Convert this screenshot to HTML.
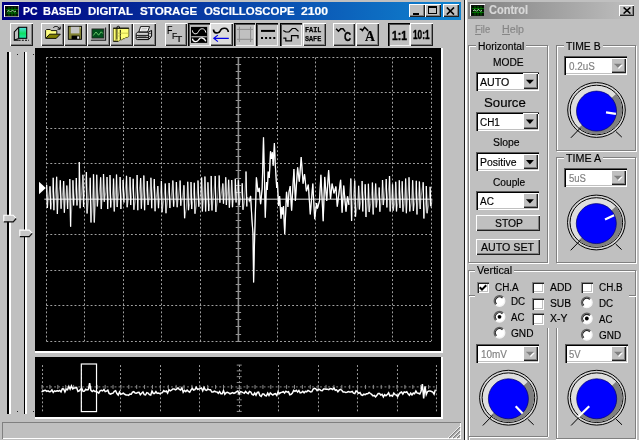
<!DOCTYPE html>
<html><head><meta charset="utf-8"><title>PC BASED DIGITAL STORAGE OSCILLOSCOPE 2100</title>
<style>
html,body{margin:0;padding:0;}
body{width:639px;height:440px;overflow:hidden;background:#c0c0c0;font-family:"Liberation Sans",sans-serif;}
#root{position:relative;width:639px;height:440px;overflow:hidden;background:#c0c0c0;}
.t{position:absolute;white-space:nowrap;-webkit-text-stroke:0.18px currentColor;}
#tx{position:absolute;left:0;top:0;width:639px;height:440px;will-change:transform;}
</style></head><body><div id="root">
<div style="position:absolute;left:2px;top:2px;width:459px;height:17.5px;background:linear-gradient(90deg,#000080 0%,#1084d0 100%);"></div>
<svg style="position:absolute;left:4px;top:5px;" width="15" height="12" viewBox="0 0 15 12"><rect x="0" y="0" width="15" height="12" fill="#c0c0c0"/><rect x="0.5" y="0.5" width="14" height="11" fill="none" stroke="#fff"/><rect x="1.5" y="1.5" width="12.5" height="9.5" fill="#001400" stroke="#101010"/><path d="M2 4.5H14M2 8H14M5 2V11M8 2V11M11 2V11" stroke="#00a800" stroke-width="0.55"/><path d="M3 6.5l2-1 1.5 1.5 2-2 2 2 1.5-1" stroke="#c0ffc0" stroke-width="0.8" fill="none"/></svg>
<div style="position:absolute;left:409px;top:3.8px;width:15.6px;height:13.6px;background:#c0c0c0;box-shadow:inset 1px 1px 0 #fff,inset -1px -1px 0 #202020,inset -2px -2px 0 #808080;"></div>
<div style="position:absolute;left:413px;top:13px;width:6px;height:2px;background:#000;"></div>
<div style="position:absolute;left:424.8px;top:3.8px;width:16px;height:13.6px;background:#c0c0c0;box-shadow:inset 1px 1px 0 #fff,inset -1px -1px 0 #202020,inset -2px -2px 0 #808080;"></div>
<div style="position:absolute;left:427.8px;top:6px;width:9px;height:8px;border:1px solid #000;border-top:2px solid #000;box-sizing:border-box;"></div>
<div style="position:absolute;left:442.8px;top:3.8px;width:16.2px;height:13.6px;background:#c0c0c0;box-shadow:inset 1px 1px 0 #fff,inset -1px -1px 0 #202020,inset -2px -2px 0 #808080;"></div>
<svg style="position:absolute;left:446.3px;top:6.5px;" width="9" height="8" viewBox="0 0 9 8"><path d="M0.8 0.5L8 7.5M8 0.5L0.8 7.5" stroke="#000" stroke-width="1.7"/></svg>
<div style="position:absolute;left:10.2px;top:23px;width:22.5px;height:22.5px;background:#c0c0c0;box-shadow:inset 1px 1px 0 #fff,inset -1px -1px 0 #202020,inset -2px -2px 0 #808080;"></div>
<div style="position:absolute;left:41px;top:23px;width:23px;height:22.5px;background:#c0c0c0;box-shadow:inset 1px 1px 0 #fff,inset -1px -1px 0 #202020,inset -2px -2px 0 #808080;"></div>
<div style="position:absolute;left:64.3px;top:23px;width:22.4px;height:22.5px;background:#c0c0c0;box-shadow:inset 1px 1px 0 #fff,inset -1px -1px 0 #202020,inset -2px -2px 0 #808080;"></div>
<div style="position:absolute;left:87px;top:23px;width:22.8px;height:22.5px;background:#c0c0c0;box-shadow:inset 1px 1px 0 #fff,inset -1px -1px 0 #202020,inset -2px -2px 0 #808080;"></div>
<div style="position:absolute;left:110px;top:23px;width:22.8px;height:22.5px;background:#c0c0c0;box-shadow:inset 1px 1px 0 #fff,inset -1px -1px 0 #202020,inset -2px -2px 0 #808080;"></div>
<div style="position:absolute;left:133.3px;top:23px;width:22.8px;height:22.5px;background:#c0c0c0;box-shadow:inset 1px 1px 0 #fff,inset -1px -1px 0 #202020,inset -2px -2px 0 #808080;"></div>
<div style="position:absolute;left:164.5px;top:23px;width:22px;height:22.5px;background:#c0c0c0;box-shadow:inset 1px 1px 0 #fff,inset -1px -1px 0 #202020,inset -2px -2px 0 #808080;"></div>
<div style="position:absolute;left:302.5px;top:23px;width:23px;height:22.5px;background:#c0c0c0;box-shadow:inset 1px 1px 0 #fff,inset -1px -1px 0 #202020,inset -2px -2px 0 #808080;"></div>
<div style="position:absolute;left:333px;top:23px;width:22.4px;height:22.5px;background:#c0c0c0;box-shadow:inset 1px 1px 0 #fff,inset -1px -1px 0 #202020,inset -2px -2px 0 #808080;"></div>
<div style="position:absolute;left:356px;top:23px;width:22.8px;height:22.5px;background:#c0c0c0;box-shadow:inset 1px 1px 0 #fff,inset -1px -1px 0 #202020,inset -2px -2px 0 #808080;"></div>
<div style="position:absolute;left:410px;top:23px;width:22.5px;height:22.5px;background:#c0c0c0;box-shadow:inset 1px 1px 0 #fff,inset -1px -1px 0 #202020,inset -2px -2px 0 #808080;"></div>
<div style="position:absolute;left:188px;top:23px;width:21.5px;height:22.5px;background:#c0c0c0;box-shadow:inset 1px 1px 0 #000,inset 2px 2px 0 #505050,inset -1px -1px 0 #f0f0f0;"></div>
<div style="position:absolute;left:233.7px;top:23px;width:21.8px;height:22.5px;background:#c0c0c0;box-shadow:inset 1px 1px 0 #000,inset 2px 2px 0 #505050,inset -1px -1px 0 #f0f0f0;"></div>
<div style="position:absolute;left:256px;top:23px;width:22px;height:22.5px;background:#c0c0c0;box-shadow:inset 1px 1px 0 #000,inset 2px 2px 0 #505050,inset -1px -1px 0 #f0f0f0;"></div>
<div style="position:absolute;left:279.5px;top:23px;width:22px;height:22.5px;background:#c0c0c0;box-shadow:inset 1px 1px 0 #000,inset 2px 2px 0 #505050,inset -1px -1px 0 #f0f0f0;"></div>
<div style="position:absolute;left:387.5px;top:23px;width:22.3px;height:22.5px;background:#c0c0c0;box-shadow:inset 1px 1px 0 #000,inset 2px 2px 0 #505050,inset -1px -1px 0 #f0f0f0;"></div>
<div style="position:absolute;left:210px;top:23px;width:22.5px;height:22.5px;background:#dcdcdc;box-shadow:inset 1px 1px 0 #fff,inset -1px -1px 0 #202020,inset -2px -2px 0 #808080;"></div>
<div style="position:absolute;left:7.4px;top:51.5px;width:1.6px;height:362.5px;background:#000;"></div>
<div style="position:absolute;left:9.0px;top:51.5px;width:1.8px;height:362.5px;background:#fff;"></div>
<div style="position:absolute;left:23.5px;top:51.5px;width:1.6px;height:362.5px;background:#000;"></div>
<div style="position:absolute;left:25.1px;top:51.5px;width:1.8px;height:362.5px;background:#fff;"></div>
<div style="position:absolute;left:35px;top:48px;width:406px;height:303px;background:#000;"></div>
<div style="position:absolute;left:441px;top:48px;width:2px;height:305.3px;background:#fff;"></div>
<div style="position:absolute;left:35px;top:351px;width:408px;height:2.3px;background:#fff;"></div>
<div style="position:absolute;left:35px;top:356.6px;width:406px;height:60.4px;background:#000;"></div>
<div style="position:absolute;left:441px;top:356.6px;width:2px;height:62.4px;background:#fff;"></div>
<div style="position:absolute;left:35px;top:417px;width:408px;height:2px;background:#fff;"></div>
<svg style="position:absolute;left:35px;top:48px;" width="406" height="303" viewBox="35 48 406 303"><path d="M46.50 57.50V341.10M84.50 57.50V341.10M123.50 57.50V341.10M161.50 57.50V341.10M200.50 57.50V341.10M277.50 57.50V341.10M315.50 57.50V341.10M354.50 57.50V341.10M392.50 57.50V341.10M431.50 57.50V341.10M46.30 57.50H431.30M46.30 92.50H431.30M46.30 128.50H431.30M46.30 163.50H431.30M46.30 234.50H431.30M46.30 270.50H431.30M46.30 305.50H431.30M46.30 341.50H431.30" stroke="#a0a0a0" stroke-width="1" stroke-dasharray="1.9 2.13" fill="none"/><path d="M238.40 57.50V341.10" stroke="#8c8c8c" stroke-width="1.6" fill="none"/><path d="M235.70 57.50H241.10M235.70 64.50H241.10M235.70 71.50H241.10M235.70 78.50H241.10M235.70 85.50H241.10M235.70 92.50H241.10M235.70 100.50H241.10M235.70 107.50H241.10M235.70 114.50H241.10M235.70 121.50H241.10M235.70 128.50H241.10M235.70 135.50H241.10M235.70 142.50H241.10M235.70 149.50H241.10M235.70 156.50H241.10M235.70 163.50H241.10M235.70 170.50H241.10M235.70 178.50H241.10M235.70 185.50H241.10M235.70 192.50H241.10M235.70 199.50H241.10M235.70 206.50H241.10M235.70 213.50H241.10M235.70 220.50H241.10M235.70 227.50H241.10M235.70 234.50H241.10M235.70 241.50H241.10M235.70 248.50H241.10M235.70 256.50H241.10M235.70 263.50H241.10M235.70 270.50H241.10M235.70 277.50H241.10M235.70 284.50H241.10M235.70 291.50H241.10M235.70 298.50H241.10M235.70 305.50H241.10M235.70 312.50H241.10M235.70 319.50H241.10M235.70 326.50H241.10M235.70 334.50H241.10M235.70 341.50H241.10" stroke="#969696" stroke-width="1" fill="none"/><path d="M44.30 199.30H431.30" stroke="#949494" stroke-width="1.5" fill="none"/><path d="M39 181.7L45.8 188L39 194.3Z" fill="#fff"/><polyline points="46.6,184.7 47.4,207.9 48.4,198.9 50.0,186.2 50.7,209.3 51.7,202.8 53.2,177.7 53.9,210.2 55.2,195.8 56.6,176.8 57.4,214.0 58.6,195.6 60.3,180.3 61.1,208.8 62.2,198.1 63.6,181.1 64.4,212.8 65.5,199.6 66.8,185.5 67.6,209.0 68.6,199.9 69.8,179.1 70.6,226.7 71.5,212.0 72.9,180.2 73.6,205.5 75.2,193.2 76.3,178.1 77.0,205.5 78.2,197.9 79.3,162.0 80.1,208.3 81.4,195.4 82.9,174.8 83.6,207.0 84.7,191.3 86.4,172.1 87.1,213.4 88.5,200.8 90.2,177.7 91.0,222.6 91.9,211.1 93.5,174.3 94.3,222.6 95.3,208.2 96.7,174.8 97.4,206.4 99.2,192.6 100.6,177.2 101.3,209.1 102.4,197.4 103.5,174.1 104.3,201.8 105.9,191.8 107.0,177.1 107.7,209.1 108.9,194.0 110.0,175.1 110.7,207.5 112.2,198.2 113.5,178.5 114.3,211.4 115.1,199.5 116.5,174.6 117.2,207.1 118.9,191.3 120.1,177.1 120.9,209.0 122.0,194.8 123.1,180.0 123.9,202.6 125.1,191.4 126.5,175.8 127.2,207.2 128.5,199.2 130.0,177.0 130.7,205.1 131.7,195.2 133.2,178.8 133.9,209.7 135.2,201.9 137.1,175.0 137.8,210.2 138.8,195.1 140.6,178.0 141.4,208.8 142.7,193.4 143.8,175.4 144.6,210.2 146.2,193.0 147.3,181.0 148.1,204.9 149.7,196.4 150.9,177.7 151.7,208.2 152.8,193.2 154.3,179.0 155.1,211.3 156.1,199.1 157.8,186.1 158.5,208.2 160.0,197.8 161.4,181.0 162.1,212.2 163.8,199.9 165.3,183.4 166.0,213.2 167.5,201.1 169.1,182.9 169.9,208.1 171.3,196.7 172.8,180.6 173.6,206.7 175.0,199.6 176.4,182.0 177.2,207.2 178.4,197.6 180.1,180.5 180.8,205.7 182.6,196.6 183.9,185.2 184.6,218.3 186.3,208.1 187.7,181.7 188.5,210.2 189.9,203.1 191.0,182.1 191.7,209.1 192.9,200.5 194.3,182.8 195.0,213.7 196.4,205.7 198.0,180.6 198.8,206.7 200.0,199.9 201.6,177.4 202.4,211.4 203.6,199.6 204.9,176.5 205.6,211.6 206.5,202.0 207.9,182.2 208.7,211.1 209.8,203.4 211.2,175.9 212.0,210.5 213.8,194.3 215.2,175.9 215.9,212.0 217.3,202.0 219.2,175.4 219.9,202.7 221.1,195.0 222.8,183.4 223.5,203.7 224.4,196.3 225.7,177.2 226.4,205.0 227.5,193.4 228.6,179.8 229.4,207.7 230.7,195.6 231.7,180.0 232.5,207.2 234.1,197.1 235.3,178.8 236.1,202.5 237.1,192.3 238.4,180.3 239.2,205.3 241.0,196.3 242.2,183.3 243.0,209.8 244.4,202.8 246.0,171.5 246.8,206.4 247.6,197.1 249.3,201.4 250.6,196.0 251.9,218.8 253.0,233.9 253.6,282.5 254.7,233.9 255.6,205.8 256.4,177.3 258.0,192.0 259.3,187.9 260.6,204.3 262.2,188.0 263.5,137.3 265.3,217.7 266.5,182.0 267.3,190.0 268.2,171.5 269.3,178.0 270.5,151.2 271.5,159.0 272.4,152.2 273.2,165.7 274.4,143.1 275.3,164.7 276.7,187.9 277.4,182.0 278.6,206.0 279.6,196.0 281.0,218.8 281.8,207.0 282.6,214.4 283.5,206.0 284.7,233.9 285.8,210.0 286.5,191.8 287.9,207.0 289.0,192.0 290.2,186.0 291.6,210.6 293.9,169.1 295.4,201.0 297.6,167.2 299.3,181.7 301.2,157.0 303.1,183.6 304.5,174.0 306.4,191.3 308.3,184.6 310.3,214.5 312.8,183.6 314.7,219.3 316.6,203.0 317.4,208.7 319.5,201.0 320.9,174.9 323.2,221.3 324.7,176.9 326.7,201.0 328.6,170.1 330.5,199.0 332.1,183.6 334.0,193.3 335.9,186.5 337.3,206.8 340.6,179.7 342.1,212.6 343.7,185.5 346.0,211.6 347.5,196.2 348.9,204.8 350.8,178.4 351.6,220.9 352.9,202.6 354.7,180.5 355.5,216.7 357.2,206.4 358.6,185.8 359.4,209.5 360.6,202.6 362.1,181.1 362.8,211.5 363.9,196.4 365.2,184.2 366.0,217.1 367.2,205.8 368.4,183.8 369.2,212.1 370.7,203.4 372.4,182.5 373.2,214.5 374.1,201.7 375.6,183.5 376.3,207.5 377.8,199.4 379.2,187.4 379.9,211.7 381.1,201.9 382.5,180.1 383.3,205.1 384.6,197.2 386.2,179.0 386.9,207.5 388.1,193.7 389.5,176.0 390.2,211.6 391.4,199.4 392.5,184.2 393.2,210.7 394.6,203.8 395.7,181.7 396.5,211.5 397.9,202.6 399.3,180.2 400.0,208.1 401.1,195.8 402.2,181.3 403.0,211.7 404.2,203.9 405.6,178.5 406.4,213.3 407.4,200.7 409.0,177.3 409.8,211.4 411.3,202.7 412.6,180.2 413.4,211.0 414.9,201.6 416.3,180.7 417.0,214.5 418.0,201.7 419.4,181.4 420.2,208.9 421.2,196.1 423.2,182.2 423.9,218.6 425.4,204.3 426.3,186.1 427.1,213.3 428.7,205.0 430.1,186.7 430.8,206.3 432.0,198.8 431.2,208.0" stroke="#fff" stroke-opacity="0.5" stroke-width="1.1" fill="none" stroke-linejoin="miter"/><path d="M46.6 184.7L47.4 207.9M50.0 186.2L50.7 209.3M53.2 177.7L53.9 210.2M56.6 176.8L57.4 214.0M60.3 180.3L61.1 208.8M63.6 181.1L64.4 212.8M66.8 185.5L67.6 209.0M69.8 179.1L70.6 226.7M72.9 180.2L73.6 205.5M76.3 178.1L77.0 205.5M79.3 162.0L80.1 208.3M82.9 174.8L83.6 207.0M86.4 172.1L87.1 213.4M90.2 177.7L91.0 222.6M93.5 174.3L94.3 222.6M96.7 174.8L97.4 206.4M100.6 177.2L101.3 209.1M103.5 174.1L104.3 201.8M107.0 177.1L107.7 209.1M110.0 175.1L110.7 207.5M113.5 178.5L114.3 211.4M116.5 174.6L117.2 207.1M120.1 177.1L120.9 209.0M123.1 180.0L123.9 202.6M126.5 175.8L127.2 207.2M130.0 177.0L130.7 205.1M133.2 178.8L133.9 209.7M137.1 175.0L137.8 210.2M140.6 178.0L141.4 208.8M143.8 175.4L144.6 210.2M147.3 181.0L148.1 204.9M150.9 177.7L151.7 208.2M154.3 179.0L155.1 211.3M157.8 186.1L158.5 208.2M161.4 181.0L162.1 212.2M165.3 183.4L166.0 213.2M169.1 182.9L169.9 208.1M172.8 180.6L173.6 206.7M176.4 182.0L177.2 207.2M180.1 180.5L180.8 205.7M183.9 185.2L184.6 218.3M187.7 181.7L188.5 210.2M191.0 182.1L191.7 209.1M194.3 182.8L195.0 213.7M198.0 180.6L198.8 206.7M201.6 177.4L202.4 211.4M204.9 176.5L205.6 211.6M207.9 182.2L208.7 211.1M211.2 175.9L212.0 210.5M215.2 175.9L215.9 212.0M219.2 175.4L219.9 202.7M222.8 183.4L223.5 203.7M225.7 177.2L226.4 205.0M228.6 179.8L229.4 207.7M231.7 180.0L232.5 207.2M235.3 178.8L236.1 202.5M238.4 180.3L239.2 205.3M242.2 183.3L243.0 209.8M246.0 171.5L246.8 206.4M350.8 178.4L351.6 220.9M354.7 180.5L355.5 216.7M358.6 185.8L359.4 209.5M362.1 181.1L362.8 211.5M365.2 184.2L366.0 217.1M368.4 183.8L369.2 212.1M372.4 182.5L373.2 214.5M375.6 183.5L376.3 207.5M379.2 187.4L379.9 211.7M382.5 180.1L383.3 205.1M386.2 179.0L386.9 207.5M389.5 176.0L390.2 211.6M392.5 184.2L393.2 210.7M395.7 181.7L396.5 211.5M399.3 180.2L400.0 208.1M402.2 181.3L403.0 211.7M405.6 178.5L406.4 213.3M409.0 177.3L409.8 211.4M412.6 180.2L413.4 211.0M416.3 180.7L417.0 214.5M419.4 181.4L420.2 208.9M423.2 182.2L423.9 218.6M426.3 186.1L427.1 213.3M430.1 186.7L430.8 206.3" stroke="#fff" stroke-width="1.25" fill="none"/><polyline points="249.3,201.4 250.6,196.0 251.9,218.8 253.0,233.9 253.6,282.5 254.7,233.9 255.6,205.8 256.4,177.3 258.0,192.0 259.3,187.9 260.6,204.3 262.2,188.0 263.5,137.3 265.3,217.7 266.5,182.0 267.3,190.0 268.2,171.5 269.3,178.0 270.5,151.2 271.5,159.0 272.4,152.2 273.2,165.7 274.4,143.1 275.3,164.7 276.7,187.9 277.4,182.0 278.6,206.0 279.6,196.0 281.0,218.8 281.8,207.0 282.6,214.4 283.5,206.0 284.7,233.9 285.8,210.0 286.5,191.8 287.9,207.0 289.0,192.0 290.2,186.0 291.6,210.6 293.9,169.1 295.4,201.0 297.6,167.2 299.3,181.7 301.2,157.0 303.1,183.6 304.5,174.0 306.4,191.3 308.3,184.6 310.3,214.5 312.8,183.6 314.7,219.3 316.6,203.0 317.4,208.7 319.5,201.0 320.9,174.9 323.2,221.3 324.7,176.9 326.7,201.0 328.6,170.1 330.5,199.0 332.1,183.6 334.0,193.3 335.9,186.5 337.3,206.8 340.6,179.7 342.1,212.6 343.7,185.5 346.0,211.6 347.5,196.2 348.9,204.8" stroke="#fff" stroke-width="1.2" fill="none" stroke-linejoin="miter"/></svg>
<svg style="position:absolute;left:35px;top:356.6px;" width="406" height="60.4" viewBox="35 356.6 406 60.4"><path d="M42.50 364.70V411.00M81.50 364.70V411.00M120.50 364.70V411.00M160.50 364.70V411.00M199.50 364.70V411.00M239.50 364.70V411.00M278.50 364.70V411.00M318.50 364.70V411.00M357.50 364.70V411.00M397.50 364.70V411.00M436.50 364.70V411.00" stroke="#a0a0a0" stroke-width="1" stroke-dasharray="1.9 2.13" fill="none"/><path d="M42.00 386.50H436.50" stroke="#888" stroke-width="1" stroke-dasharray="1.9 2.13" fill="none"/><path d="M236.75 364.70H241.75M236.75 370.49H241.75M236.75 376.28H241.75M236.75 382.06H241.75M236.75 387.85H241.75M236.75 393.64H241.75M236.75 399.43H241.75M236.75 405.21H241.75M236.75 411.00H241.75M42.00 384.50V388.50M49.89 384.50V388.50M57.78 384.50V388.50M65.67 384.50V388.50M73.56 384.50V388.50M81.45 384.50V388.50M89.34 384.50V388.50M97.23 384.50V388.50M105.12 384.50V388.50M113.01 384.50V388.50M120.90 384.50V388.50M128.79 384.50V388.50M136.68 384.50V388.50M144.57 384.50V388.50M152.46 384.50V388.50M160.35 384.50V388.50M168.24 384.50V388.50M176.13 384.50V388.50M184.02 384.50V388.50M191.91 384.50V388.50M199.80 384.50V388.50M207.69 384.50V388.50M215.58 384.50V388.50M223.47 384.50V388.50M231.36 384.50V388.50M239.25 384.50V388.50M247.14 384.50V388.50M255.03 384.50V388.50M262.92 384.50V388.50M270.81 384.50V388.50M278.70 384.50V388.50M286.59 384.50V388.50M294.48 384.50V388.50M302.37 384.50V388.50M310.26 384.50V388.50M318.15 384.50V388.50M326.04 384.50V388.50M333.93 384.50V388.50M341.82 384.50V388.50M349.71 384.50V388.50M357.60 384.50V388.50M365.49 384.50V388.50M373.38 384.50V388.50M381.27 384.50V388.50M389.16 384.50V388.50M397.05 384.50V388.50M404.94 384.50V388.50M412.83 384.50V388.50M420.72 384.50V388.50M428.61 384.50V388.50M436.50 384.50V388.50" stroke="#909090" stroke-width="1" fill="none"/><polyline points="41.5,391.3 42.8,390.8 44.1,390.1 45.4,389.8 46.7,391.0 48.0,390.4 49.3,391.3 50.6,391.1 51.9,389.5 53.2,392.1 54.5,390.5 55.8,391.0 57.1,390.3 58.4,390.8 59.7,390.0 61.0,391.5 62.3,388.4 63.6,388.6 64.9,391.5 66.2,388.7 67.5,389.4 68.8,386.0 70.1,388.8 71.4,385.5 72.7,388.4 74.0,387.6 75.3,387.5 76.6,387.0 77.9,391.0 79.2,390.4 80.5,389.0 81.8,388.0 83.1,391.1 84.4,390.8 85.7,388.9 87.0,389.5 88.3,389.2 89.6,382.8 90.9,389.9 92.2,391.1 93.5,390.1 94.8,391.0 96.1,390.8 97.4,391.8 98.7,392.8 100.0,390.4 101.3,390.0 102.6,390.5 103.9,389.1 105.2,391.1 106.5,390.7 107.8,389.8 109.1,393.0 110.4,393.8 111.7,393.1 113.0,392.7 114.3,391.0 115.6,390.3 116.9,393.1 118.2,394.6 119.5,391.6 120.8,393.9 122.1,393.4 123.4,392.8 124.7,393.9 126.0,394.5 127.3,394.5 128.6,395.0 129.9,393.7 131.2,393.9 132.5,391.8 133.8,391.2 135.1,392.6 136.4,392.8 137.7,392.2 139.0,392.0 140.3,394.3 141.6,392.8 142.9,391.6 144.2,394.3 145.5,394.6 146.8,392.2 148.1,392.7 149.4,394.3 150.7,394.7 152.0,390.7 153.3,393.0 154.6,393.0 155.9,391.1 157.2,393.0 158.5,392.7 159.8,393.2 161.1,392.6 162.4,392.3 163.7,390.3 165.0,391.3 166.3,390.6 167.6,392.7 168.9,389.4 170.2,390.5 171.5,389.8 172.8,388.5 174.1,388.5 175.4,389.4 176.7,388.7 178.0,387.4 179.3,389.1 180.6,389.6 181.9,387.4 183.2,391.8 184.5,389.9 185.8,391.2 187.1,389.7 188.4,391.0 189.7,391.8 191.0,389.5 192.3,388.1 193.6,389.7 194.9,389.3 196.2,386.9 197.5,389.0 198.8,388.6 200.1,388.2 201.4,387.6 202.7,390.5 204.0,387.0 205.3,389.5 206.6,390.0 207.9,388.5 209.2,389.4 210.5,389.3 211.8,391.6 213.1,391.5 214.4,390.8 215.7,391.4 217.0,391.6 218.3,392.9 219.6,391.1 220.9,393.3 222.2,393.3 223.5,390.2 224.8,393.8 226.1,392.3 227.4,391.9 228.7,392.5 230.0,393.4 231.3,392.8 232.6,392.2 233.9,393.0 235.2,392.4 236.5,391.2 237.8,390.6 239.1,393.4 240.4,391.2 241.7,391.5 243.0,392.2 244.3,392.8 245.6,391.1 246.9,392.4 248.2,393.2 249.5,391.0 250.8,391.6 252.1,394.0 253.4,394.6 254.7,392.6 256.0,394.8 257.3,392.1 258.6,391.8 259.9,395.2 261.2,396.1 262.5,393.6 263.8,393.6 265.1,395.1 266.4,395.4 267.7,392.7 269.0,395.0 270.3,392.5 271.6,393.7 272.9,394.7 274.2,393.6 275.5,393.3 276.8,395.1 278.1,391.3 279.4,393.2 280.7,392.2 282.0,391.8 283.3,391.3 284.6,392.7 285.9,390.8 287.2,391.7 288.5,391.2 289.8,394.4 291.1,393.9 292.4,392.6 293.7,390.0 295.0,390.9 296.3,390.0 297.6,391.7 298.9,390.1 300.2,392.5 301.5,392.2 302.8,390.9 304.1,392.4 305.4,391.0 306.7,391.4 308.0,390.0 309.3,390.8 310.6,391.6 311.9,391.2 313.2,388.6 314.5,387.9 315.8,388.5 317.1,390.2 318.4,388.8 319.7,389.0 321.0,390.2 322.3,390.4 323.6,388.6 324.9,388.5 326.2,388.8 327.5,388.8 328.8,389.2 330.1,388.2 331.4,388.4 332.7,389.1 334.0,387.6 335.3,389.9 336.6,389.4 337.9,391.3 339.2,389.8 340.5,389.0 341.8,389.8 343.1,391.6 344.4,391.5 345.7,392.0 347.0,391.8 348.3,391.2 349.6,391.6 350.9,391.5 352.2,391.0 353.5,392.7 354.8,393.2 356.1,390.5 357.4,391.4 358.7,392.9 360.0,392.2 361.3,394.4 362.6,395.0 363.9,393.8 365.2,394.2 366.5,393.4 367.8,393.3 369.1,392.1 370.4,393.1 371.7,394.0 373.0,395.5 374.3,395.0 375.6,396.5 376.9,394.9 378.2,393.1 379.5,393.2 380.8,394.7 382.1,393.9 383.4,396.5 384.7,394.2 386.0,395.4 387.3,394.2 388.6,392.4 389.9,395.5 391.2,394.9 392.5,395.8 393.8,392.7 395.1,394.2 396.4,394.6 397.7,396.2 399.0,393.8 400.3,392.3 401.6,391.6 402.9,393.7 404.2,391.5 405.5,392.1 406.8,391.4 408.1,393.5 409.4,394.8 410.7,392.7 412.0,394.5 413.3,392.6 414.6,393.4 415.9,390.6 417.2,392.7 418.5,392.9 419.8,393.6 421.1,390.8 422.4,383.7 423.7,398.0 425.0,386.0 426.3,394.2 427.6,391.1 428.9,390.7 430.2,390.7 431.5,391.1 432.8,391.7 434.1,393.7 435.4,389.2" stroke="#fff" stroke-width="1.5" fill="none"/><rect x="81.3" y="363.6" width="15.2" height="47.6" fill="none" stroke="#fff" stroke-width="1.2"/></svg>
<div style="position:absolute;left:2px;top:421.8px;width:458.5px;height:17.4px;box-shadow:inset 1px 1px 0 #808080,inset -1px -1px 0 #fff;"></div>
<div style="position:absolute;left:461.2px;top:0px;width:2.3px;height:440px;background:#c0c0c0;"></div>
<div style="position:absolute;left:463.6px;top:0px;width:1.4px;height:440px;background:#181818;"></div>
<div style="position:absolute;left:465px;top:0px;width:2.3px;height:440px;background:#fff;"></div>
<div style="position:absolute;left:468px;top:2.4px;width:169px;height:16.4px;background:linear-gradient(90deg,#808080 0%,#c0c0c0 100%);"></div>
<svg style="position:absolute;left:470.3px;top:3.6px;" width="15" height="12.5" viewBox="0 0 15 12.5"><rect x="0" y="0" width="15" height="12.5" fill="#d0d0d0"/><rect x="0.5" y="0.5" width="14" height="11.5" fill="none" stroke="#fff"/><rect x="1.5" y="1.5" width="12.5" height="10" fill="#001400" stroke="#101010"/><path d="M2 4.5H14M2 8.5H14M5 2V11.5M8 2V11.5M11 2V11.5" stroke="#00a800" stroke-width="0.55"/><path d="M3 6.8l2-1 1.5 1.5 2-2 2 2 1.5-1" stroke="#d0ffd0" stroke-width="0.8" fill="none"/></svg>
<div style="position:absolute;left:619px;top:4.5px;width:15px;height:11.5px;background:#c0c0c0;box-shadow:inset 1px 1px 0 #fff,inset -1px -1px 0 #202020,inset -2px -2px 0 #808080;"></div>
<svg style="position:absolute;left:622.5px;top:6.5px;" width="8" height="7" viewBox="0 0 8 7"><path d="M0.6 0.4L7.4 6.6M7.4 0.4L0.6 6.6" stroke="#000" stroke-width="1.5"/></svg>
<div style="position:absolute;left:468px;top:45px;width:80px;height:218px;box-sizing:border-box;border:1px solid #808080;box-shadow:1px 1px 0 #fff,inset 1px 1px 0 #fff;"></div>
<div style="position:absolute;left:475.6px;top:44px;width:50.4px;height:3px;background:#c0c0c0;"></div>
<div style="position:absolute;left:556px;top:45px;width:80px;height:106px;box-sizing:border-box;border:1px solid #808080;box-shadow:1px 1px 0 #fff,inset 1px 1px 0 #fff;"></div>
<div style="position:absolute;left:564.1px;top:44px;width:38.6px;height:3px;background:#c0c0c0;"></div>
<div style="position:absolute;left:556px;top:157px;width:80px;height:106px;box-sizing:border-box;border:1px solid #808080;box-shadow:1px 1px 0 #fff,inset 1px 1px 0 #fff;"></div>
<div style="position:absolute;left:564.1px;top:156px;width:39.2px;height:3px;background:#c0c0c0;"></div>
<div style="position:absolute;left:468px;top:270px;width:168px;height:175px;box-sizing:border-box;border:1px solid #808080;box-shadow:1px 1px 0 #fff,inset 1px 1px 0 #fff;"></div>
<div style="position:absolute;left:475.1px;top:269px;width:39.3px;height:3px;background:#c0c0c0;"></div>
<div style="position:absolute;left:474.6px;top:33.8px;width:6px;height:1px;background:#868686;"></div>
<div style="position:absolute;left:502.1px;top:33.8px;width:7.5px;height:1px;background:#868686;"></div>
<div style="position:absolute;left:476.4px;top:71.5px;width:63px;height:19.3px;background:#fff;box-shadow:inset 1px 1px 0 #585858,inset 2px 2px 0 #000,inset -1px -1px 0 #fff,inset -2px -2px 0 #c0c0c0;"></div>
<div style="position:absolute;left:522.5999999999999px;top:73.3px;width:15.2px;height:15.9px;background:#c0c0c0;box-shadow:inset 1px 1px 0 #fff,inset -1px -1px 0 #202020,inset -2px -2px 0 #808080;"></div>
<svg style="position:absolute;left:0px;top:0px;pointer-events:none;" width="639" height="440" viewBox="0 0 639 440"><path d="M525.90 79.65H533.90L529.90 83.95Z" fill="#000"/></svg>
<div style="position:absolute;left:476.4px;top:111.5px;width:63px;height:19.2px;background:#fff;box-shadow:inset 1px 1px 0 #585858,inset 2px 2px 0 #000,inset -1px -1px 0 #fff,inset -2px -2px 0 #c0c0c0;"></div>
<div style="position:absolute;left:522.5999999999999px;top:113.3px;width:15.2px;height:15.799999999999999px;background:#c0c0c0;box-shadow:inset 1px 1px 0 #fff,inset -1px -1px 0 #202020,inset -2px -2px 0 #808080;"></div>
<svg style="position:absolute;left:0px;top:0px;pointer-events:none;" width="639" height="440" viewBox="0 0 639 440"><path d="M525.90 119.60H533.90L529.90 123.90Z" fill="#000"/></svg>
<div style="position:absolute;left:476.4px;top:152.2px;width:63px;height:18.8px;background:#fff;box-shadow:inset 1px 1px 0 #585858,inset 2px 2px 0 #000,inset -1px -1px 0 #fff,inset -2px -2px 0 #c0c0c0;"></div>
<div style="position:absolute;left:522.5999999999999px;top:154.0px;width:15.2px;height:15.4px;background:#c0c0c0;box-shadow:inset 1px 1px 0 #fff,inset -1px -1px 0 #202020,inset -2px -2px 0 #808080;"></div>
<svg style="position:absolute;left:0px;top:0px;pointer-events:none;" width="639" height="440" viewBox="0 0 639 440"><path d="M525.90 160.10H533.90L529.90 164.40Z" fill="#000"/></svg>
<div style="position:absolute;left:476.4px;top:191.3px;width:63px;height:18.8px;background:#fff;box-shadow:inset 1px 1px 0 #585858,inset 2px 2px 0 #000,inset -1px -1px 0 #fff,inset -2px -2px 0 #c0c0c0;"></div>
<div style="position:absolute;left:522.5999999999999px;top:193.10000000000002px;width:15.2px;height:15.4px;background:#c0c0c0;box-shadow:inset 1px 1px 0 #fff,inset -1px -1px 0 #202020,inset -2px -2px 0 #808080;"></div>
<svg style="position:absolute;left:0px;top:0px;pointer-events:none;" width="639" height="440" viewBox="0 0 639 440"><path d="M525.90 199.20H533.90L529.90 203.50Z" fill="#000"/></svg>
<div style="position:absolute;left:564.4px;top:55.7px;width:63px;height:19px;background:#fff;box-shadow:inset 1px 1px 0 #585858,inset 2px 2px 0 #000,inset -1px -1px 0 #fff,inset -2px -2px 0 #c0c0c0;"></div>
<div style="position:absolute;left:610.5999999999999px;top:57.5px;width:15.2px;height:15.6px;background:#c0c0c0;box-shadow:inset 1px 1px 0 #fff,inset -1px -1px 0 #202020,inset -2px -2px 0 #808080;"></div>
<svg style="position:absolute;left:0px;top:0px;pointer-events:none;" width="639" height="440" viewBox="0 0 639 440"><path d="M614.90 64.70H622.90L618.90 69.00Z" fill="#fff"/><path d="M613.90 63.70H621.90L617.90 68.00Z" fill="#808080"/></svg>
<div style="position:absolute;left:564.3px;top:167.7px;width:63px;height:19.2px;background:#fff;box-shadow:inset 1px 1px 0 #585858,inset 2px 2px 0 #000,inset -1px -1px 0 #fff,inset -2px -2px 0 #c0c0c0;"></div>
<div style="position:absolute;left:610.4999999999999px;top:169.5px;width:15.2px;height:15.799999999999999px;background:#c0c0c0;box-shadow:inset 1px 1px 0 #fff,inset -1px -1px 0 #202020,inset -2px -2px 0 #808080;"></div>
<svg style="position:absolute;left:0px;top:0px;pointer-events:none;" width="639" height="440" viewBox="0 0 639 440"><path d="M614.80 176.80H622.80L618.80 181.10Z" fill="#fff"/><path d="M613.80 175.80H621.80L617.80 180.10Z" fill="#808080"/></svg>
<div style="position:absolute;left:476.4px;top:343.7px;width:63px;height:19.2px;background:#fff;box-shadow:inset 1px 1px 0 #585858,inset 2px 2px 0 #000,inset -1px -1px 0 #fff,inset -2px -2px 0 #c0c0c0;"></div>
<div style="position:absolute;left:522.5999999999999px;top:345.5px;width:15.2px;height:15.799999999999999px;background:#c0c0c0;box-shadow:inset 1px 1px 0 #fff,inset -1px -1px 0 #202020,inset -2px -2px 0 #808080;"></div>
<svg style="position:absolute;left:0px;top:0px;pointer-events:none;" width="639" height="440" viewBox="0 0 639 440"><path d="M526.90 352.80H534.90L530.90 357.10Z" fill="#fff"/><path d="M525.90 351.80H533.90L529.90 356.10Z" fill="#808080"/></svg>
<div style="position:absolute;left:564.5px;top:343.7px;width:63px;height:19.2px;background:#fff;box-shadow:inset 1px 1px 0 #585858,inset 2px 2px 0 #000,inset -1px -1px 0 #fff,inset -2px -2px 0 #c0c0c0;"></div>
<div style="position:absolute;left:610.6999999999999px;top:345.5px;width:15.2px;height:15.799999999999999px;background:#c0c0c0;box-shadow:inset 1px 1px 0 #fff,inset -1px -1px 0 #202020,inset -2px -2px 0 #808080;"></div>
<svg style="position:absolute;left:0px;top:0px;pointer-events:none;" width="639" height="440" viewBox="0 0 639 440"><path d="M615.00 352.80H623.00L619.00 357.10Z" fill="#fff"/><path d="M614.00 351.80H622.00L618.00 356.10Z" fill="#808080"/></svg>
<div style="position:absolute;left:476.2px;top:214.6px;width:63.8px;height:16.8px;background:#c0c0c0;box-shadow:inset 1px 1px 0 #fff,inset -1px -1px 0 #202020,inset -2px -2px 0 #808080;"></div>
<div style="position:absolute;left:476.2px;top:239px;width:63.8px;height:16.4px;background:#c0c0c0;box-shadow:inset 1px 1px 0 #fff,inset -1px -1px 0 #202020,inset -2px -2px 0 #808080;"></div>
<div style="position:absolute;left:476.7px;top:281.6px;width:12px;height:11.6px;background:#fff;box-shadow:inset 1px 1px 0 #808080,inset 2px 2px 0 #202020,inset -1px -1px 0 #fff,inset -2px -2px 0 #c0c0c0;"></div>
<svg style="position:absolute;left:476.7px;top:281.6px;" width="12" height="12" viewBox="0 0 12 12"><path d="M2.8 5.2L5 7.6L9.2 3.2" stroke="#000" stroke-width="2" fill="none"/></svg>
<div style="position:absolute;left:532.4px;top:281.6px;width:12px;height:11.6px;background:#fff;box-shadow:inset 1px 1px 0 #808080,inset 2px 2px 0 #202020,inset -1px -1px 0 #fff,inset -2px -2px 0 #c0c0c0;"></div>
<div style="position:absolute;left:532.4px;top:298px;width:12px;height:11.6px;background:#fff;box-shadow:inset 1px 1px 0 #808080,inset 2px 2px 0 #202020,inset -1px -1px 0 #fff,inset -2px -2px 0 #c0c0c0;"></div>
<div style="position:absolute;left:532.4px;top:313.4px;width:12px;height:11.6px;background:#fff;box-shadow:inset 1px 1px 0 #808080,inset 2px 2px 0 #202020,inset -1px -1px 0 #fff,inset -2px -2px 0 #c0c0c0;"></div>
<div style="position:absolute;left:580.9px;top:281.6px;width:12px;height:11.6px;background:#fff;box-shadow:inset 1px 1px 0 #808080,inset 2px 2px 0 #202020,inset -1px -1px 0 #fff,inset -2px -2px 0 #c0c0c0;"></div>
<svg style="position:absolute;left:0px;top:0px;pointer-events:none;" width="639" height="440" viewBox="0 0 639 440"><circle cx="499.5" cy="301" r="5.3" fill="#fff"/><path d="M495.75 304.75A5.3 5.3 0 0 1 503.25 297.25" stroke="#606060" stroke-width="1.3" fill="none"/><path d="M496.60 303.90A4.1 4.1 0 0 1 502.40 298.10" stroke="#202020" stroke-width="1.1" fill="none"/><path d="M495.75 304.75A5.3 5.3 0 0 0 503.25 297.25" stroke="#f4f4f4" stroke-width="1.3" fill="none"/></svg>
<svg style="position:absolute;left:0px;top:0px;pointer-events:none;" width="639" height="440" viewBox="0 0 639 440"><circle cx="499.5" cy="316.8" r="5.3" fill="#fff"/><path d="M495.75 320.55A5.3 5.3 0 0 1 503.25 313.05" stroke="#606060" stroke-width="1.3" fill="none"/><path d="M496.60 319.70A4.1 4.1 0 0 1 502.40 313.90" stroke="#202020" stroke-width="1.1" fill="none"/><path d="M495.75 320.55A5.3 5.3 0 0 0 503.25 313.05" stroke="#f4f4f4" stroke-width="1.3" fill="none"/><circle cx="499.5" cy="316.8" r="1.9" fill="#000"/></svg>
<svg style="position:absolute;left:0px;top:0px;pointer-events:none;" width="639" height="440" viewBox="0 0 639 440"><circle cx="499.5" cy="332.7" r="5.3" fill="#fff"/><path d="M495.75 336.45A5.3 5.3 0 0 1 503.25 328.95" stroke="#606060" stroke-width="1.3" fill="none"/><path d="M496.60 335.60A4.1 4.1 0 0 1 502.40 329.80" stroke="#202020" stroke-width="1.1" fill="none"/><path d="M495.75 336.45A5.3 5.3 0 0 0 503.25 328.95" stroke="#f4f4f4" stroke-width="1.3" fill="none"/></svg>
<svg style="position:absolute;left:0px;top:0px;pointer-events:none;" width="639" height="440" viewBox="0 0 639 440"><circle cx="586.8" cy="302.4" r="5.3" fill="#fff"/><path d="M583.05 306.15A5.3 5.3 0 0 1 590.55 298.65" stroke="#606060" stroke-width="1.3" fill="none"/><path d="M583.90 305.30A4.1 4.1 0 0 1 589.70 299.50" stroke="#202020" stroke-width="1.1" fill="none"/><path d="M583.05 306.15A5.3 5.3 0 0 0 590.55 298.65" stroke="#f4f4f4" stroke-width="1.3" fill="none"/></svg>
<svg style="position:absolute;left:0px;top:0px;pointer-events:none;" width="639" height="440" viewBox="0 0 639 440"><circle cx="586.8" cy="318.5" r="5.3" fill="#fff"/><path d="M583.05 322.25A5.3 5.3 0 0 1 590.55 314.75" stroke="#606060" stroke-width="1.3" fill="none"/><path d="M583.90 321.40A4.1 4.1 0 0 1 589.70 315.60" stroke="#202020" stroke-width="1.1" fill="none"/><path d="M583.05 322.25A5.3 5.3 0 0 0 590.55 314.75" stroke="#f4f4f4" stroke-width="1.3" fill="none"/><circle cx="586.8" cy="318.5" r="1.9" fill="#000"/></svg>
<svg style="position:absolute;left:0px;top:0px;pointer-events:none;" width="639" height="440" viewBox="0 0 639 440"><circle cx="586.8" cy="334.7" r="5.3" fill="#fff"/><path d="M583.05 338.45A5.3 5.3 0 0 1 590.55 330.95" stroke="#606060" stroke-width="1.3" fill="none"/><path d="M583.90 337.60A4.1 4.1 0 0 1 589.70 331.80" stroke="#202020" stroke-width="1.1" fill="none"/><path d="M583.05 338.45A5.3 5.3 0 0 0 590.55 330.95" stroke="#f4f4f4" stroke-width="1.3" fill="none"/></svg>
<div style="position:absolute;left:547.3px;top:327.7px;width:1px;height:109.30000000000001px;background:#808080;"></div>
<div style="position:absolute;left:548.3px;top:327.7px;width:1px;height:109.30000000000001px;background:#fff;"></div>
<div style="position:absolute;left:556.1px;top:327.7px;width:1px;height:110.30000000000001px;background:#808080;"></div>
<div style="position:absolute;left:557.1px;top:327.7px;width:1px;height:110.30000000000001px;background:#fff;"></div>
<div style="position:absolute;left:469px;top:294.5px;width:6.300000000000011px;height:1px;background:#808080;"></div>
<div style="position:absolute;left:469px;top:295.5px;width:6.300000000000011px;height:1px;background:#fff;"></div>
<div style="position:absolute;left:628.6px;top:295.2px;width:7.699999999999932px;height:1px;background:#808080;"></div>
<div style="position:absolute;left:628.6px;top:296.2px;width:7.699999999999932px;height:1px;background:#fff;"></div>
<div style="position:absolute;left:469px;top:436px;width:79.29999999999995px;height:1px;background:#808080;"></div>
<div style="position:absolute;left:469px;top:437px;width:79.29999999999995px;height:1px;background:#fff;"></div>
<div style="position:absolute;left:556.1px;top:437.5px;width:79.89999999999998px;height:1px;background:#808080;"></div>
<div style="position:absolute;left:556.1px;top:438.5px;width:79.89999999999998px;height:1px;background:#fff;"></div>
<svg style="position:absolute;left:0px;top:0px;pointer-events:none;" width="639" height="440" viewBox="0 0 639 440"><ellipse cx="596.5" cy="110" rx="28.8" ry="27.4" fill="#d4d4d4" stroke="#000" stroke-width="1"/><ellipse cx="596.5" cy="110" rx="26.3" ry="24.8" fill="#dedede" stroke="#000" stroke-width="1"/><path d="M615.97 94.06A25.8 24.3 0 0 1 578.90 127.77Z" fill="#808080"/><circle cx="596.5" cy="111.1" r="20" fill="#0000ff" stroke="#000070" stroke-width="0.7"/><path d="M570.90 137.80L580.50 127.90M621.80 137.10L615.90 131.50" stroke="#000" stroke-width="1"/><path d="M606.01 112.44L615.91 113.83" stroke="#fff" stroke-width="2.2"/></svg>
<svg style="position:absolute;left:0px;top:0px;pointer-events:none;" width="639" height="440" viewBox="0 0 639 440"><ellipse cx="596.3" cy="222.5" rx="28.8" ry="27.4" fill="#d4d4d4" stroke="#000" stroke-width="1"/><ellipse cx="596.3" cy="222.5" rx="26.3" ry="24.8" fill="#dedede" stroke="#000" stroke-width="1"/><path d="M615.77 206.56A25.8 24.3 0 0 1 578.70 240.27Z" fill="#808080"/><circle cx="596.3" cy="223.6" r="20" fill="#0000ff" stroke="#000070" stroke-width="0.7"/><path d="M570.70 250.30L580.30 240.40M621.60 249.60L615.70 244.00" stroke="#000" stroke-width="1"/><path d="M605.00 219.54L614.06 215.32" stroke="#fff" stroke-width="2.2"/></svg>
<svg style="position:absolute;left:0px;top:0px;pointer-events:none;" width="639" height="440" viewBox="0 0 639 440"><ellipse cx="508.4" cy="397.7" rx="28.8" ry="27.4" fill="#d4d4d4" stroke="#000" stroke-width="1"/><ellipse cx="508.4" cy="397.7" rx="26.3" ry="24.8" fill="#dedede" stroke="#000" stroke-width="1"/><path d="M527.87 381.76A25.8 24.3 0 0 1 490.80 415.47Z" fill="#808080"/><circle cx="508.4" cy="398.8" r="20" fill="#0000ff" stroke="#000070" stroke-width="0.7"/><path d="M482.80 425.50L492.40 415.60M533.70 424.80L527.80 419.20" stroke="#000" stroke-width="1"/><path d="M515.69 406.35L522.64 413.55" stroke="#fff" stroke-width="2.2"/></svg>
<svg style="position:absolute;left:0px;top:0px;pointer-events:none;" width="639" height="440" viewBox="0 0 639 440"><ellipse cx="596.7" cy="397.7" rx="28.8" ry="27.4" fill="#d4d4d4" stroke="#000" stroke-width="1"/><ellipse cx="596.7" cy="397.7" rx="26.3" ry="24.8" fill="#dedede" stroke="#000" stroke-width="1"/><path d="M616.17 381.76A25.8 24.3 0 0 1 579.10 415.47Z" fill="#808080"/><circle cx="596.7" cy="398.8" r="20" fill="#0000ff" stroke="#000070" stroke-width="0.7"/><path d="M571.10 425.50L580.70 415.60M622.00 424.80L616.10 419.20" stroke="#000" stroke-width="1"/><path d="M589.22 406.17L578.19 417.06" stroke="#fff" stroke-width="2.2"/></svg>
<svg style="position:absolute;left:0px;top:0px;pointer-events:none;" width="639" height="60" viewBox="0 0 639 60"><defs><linearGradient id="gd" x1="0" y1="0" x2="0" y2="1"><stop offset="0" stop-color="#58e0e8"/><stop offset="0.55" stop-color="#10e060"/><stop offset="1" stop-color="#20e8b0"/></linearGradient></defs><path d="M18.6 27.4L14.3 31.9V40.1H18.6" fill="none" stroke="#000" stroke-width="1.1"/><path d="M14.3 40.1L18.6 38.4" stroke="#000" stroke-width="0.9"/><rect x="18.7" y="27.3" width="8" height="11" fill="url(#gd)" stroke="#000" stroke-width="1.1"/><path d="M18.6 40.2H29" stroke="#000" stroke-width="1.1" stroke-dasharray="2 1.2"/><path d="M45.6 38.2V30.4L46.6 29.5H50.2L51.2 30.6H56.8V34" fill="#ffff80" stroke="#000" stroke-width="0.9"/><path d="M45.8 38.4L49.6 34.2H60.3L56.2 38.4Z" fill="#808000" stroke="#000" stroke-width="0.9"/><path d="M53.3 27.6C55 25.8 58.5 26 59.5 29" fill="none" stroke="#000" stroke-width="1"/><path d="M57.5 29.2H60.2V26.6" fill="none" stroke="#000" stroke-width="1"/><rect x="68.3" y="26.3" width="13.2" height="13" fill="#848434" stroke="#000" stroke-width="0.9"/><rect x="70.8" y="26.8" width="8.6" height="6.6" fill="#c4c4c4"/><rect x="71.6" y="35.6" width="8" height="3.6" fill="#000"/><rect x="77.2" y="36.4" width="1.9" height="2.3" fill="#e8e8e8"/><rect x="79.8" y="27.2" width="1" height="1.2" fill="#e0e0a0"/><rect x="90.7" y="27.4" width="15" height="13" fill="#a8a8a8"/><path d="M91 40.4V27.7H105.7" stroke="#d0d0d0" stroke-width="0.8" fill="none"/><path d="M90.9 40.2H105.6V27.6" stroke="#202020" stroke-width="1.1" fill="none"/><rect x="92" y="29" width="11.8" height="9" fill="#00501c" stroke="#202020" stroke-width="0.8"/><path d="M93.3 35.5L96 32L98.6 35.2L101.2 31.8L102.8 33.5" stroke="#70d070" stroke-width="0.9" fill="none"/><path d="M113.4 28.3H128.8V36.4L127.2 37.6L125.8 37.4L124.4 38.8L123 38.6L121.8 40L120.4 39.8L119 41.2H113.4Z" fill="#ffff78" stroke="#404000" stroke-width="0.7"/><path d="M113.2 28.2H128.9" stroke="#000" stroke-width="1.1"/><path d="M116.9 28.2V39.6M120.3 29.8V39.8" stroke="#101000" stroke-width="1" fill="none"/><path d="M117 28V26.9C117 26 119.5 26 119.5 26.9V28" stroke="#000" stroke-width="0.9" fill="none"/><path d="M117.6 33.2H128.2M117.6 36H121" stroke="#c0c040" stroke-width="0.8"/><path d="M115.6 29V40.6" stroke="#b0b030" stroke-width="0.8"/><path d="M113.3 41.3H118" stroke="#000" stroke-width="0.9"/><path d="M140.6 26.6H149.6L147.6 32H138.8Z" fill="#fff" stroke="#000" stroke-width="0.9"/><path d="M141.6 28.4H147.4M141 30H146.8" stroke="#909090" stroke-width="0.6"/><path d="M138.6 32.2H148.4L151.6 30.4V36.2L148.6 39.6H137.6C136 39.6 136 38.6 136.2 37.8V34.2C136.2 33 137 32.2 138.6 32.2Z" fill="#d0d0d0" stroke="#000" stroke-width="1"/><path d="M136.4 35.4H148.4M136.6 37.6H148.4M148.4 32.4V39.4" stroke="#000" stroke-width="0.9" fill="none"/><path d="M138.2 36.5H146.6" stroke="#707070" stroke-width="0.9"/><circle cx="150" cy="33.4" r="0.6" fill="#000"/><circle cx="150" cy="36.4" r="0.6" fill="#000"/><rect x="191" y="26.9" width="16.2" height="16" fill="#000"/><path d="M192.4 30.4C192.6 34.8 197.4 34.8 198.6 31.4C199.8 27.8 205.2 27.6 205.8 32.6" stroke="#fff" stroke-width="1" fill="none"/><path d="M191.4 36.8H206.8" stroke="#fff" stroke-width="0.9"/><path d="M192.4 38.6C193 42.4 197.4 42.6 198.8 39.6C200.2 37 204.4 37.4 205.8 41.2" stroke="#fff" stroke-width="1.3" fill="none"/><path d="M213.5 29.4C213.6 33.6 218.6 34.2 220.2 30.8C221.6 27.4 227.8 27 228.3 32" stroke="#000" stroke-width="1.7" fill="none"/><path d="M213.6 38.3H228.8M217.9 35.1L213.8 38.3L217.9 41.6" stroke="#0000e8" stroke-width="1.2" fill="none"/><path d="M239.4 26.7V42M250.6 26.7V42M236.9 29.4H253M236.9 39.3H253" stroke="#8c8c8c" stroke-width="1" fill="none"/><path d="M261 30.9H275" stroke="#000" stroke-width="2"/><path d="M261 37.9H276" stroke="#000" stroke-width="2" stroke-dasharray="2 2.1"/><path d="M283.3 30.4L285.8 32H289L292.3 28.5H295.5L298.5 31.4" stroke="#000" stroke-width="1.2" fill="none"/><path d="M283.3 38.1H285.8V40.9H291.5V35.6H298V38.6" stroke="#000" stroke-width="1.2" fill="none"/><path d="M336.1 28.7L338.5 31.2L340.8 28.7H343L345.2 31.6" stroke="#000" stroke-width="1.5" fill="none"/><path d="M359.7 29.2H361.2L362.4 30.5L364.6 27.3L368.2 30.9" stroke="#000" stroke-width="1.5" fill="none"/></svg>
<svg style="position:absolute;left:0px;top:0px;pointer-events:none;" width="60" height="440" viewBox="0 0 60 440"><path d="M3.8 215.2H13.2L16.2 218.5L13.2 221.79999999999998H3.8Z" fill="#c8c8c8"/><path d="M3.8 221.79999999999998V215.2H13.2L16.2 218.5" stroke="#fff" stroke-width="1.1" fill="none"/><path d="M16.2 218.5L13.2 221.79999999999998H3.8" stroke="#101010" stroke-width="1.2" fill="none"/></svg>
<svg style="position:absolute;left:0px;top:0px;pointer-events:none;" width="60" height="440" viewBox="0 0 60 440"><path d="M19.8 230.1H29.200000000000003L32.2 233.4L29.200000000000003 236.7H19.8Z" fill="#c8c8c8"/><path d="M19.8 236.7V230.1H29.200000000000003L32.2 233.4" stroke="#fff" stroke-width="1.1" fill="none"/><path d="M32.2 233.4L29.200000000000003 236.7H19.8" stroke="#101010" stroke-width="1.2" fill="none"/></svg>
<div style="position:absolute;left:16.9px;top:53.8px;width:1px;height:1px;background:#202020;"></div>
<div style="position:absolute;left:33.3px;top:53.8px;width:1px;height:1px;background:#202020;"></div>
<div style="position:absolute;left:16.8px;top:411.0px;width:1px;height:1px;background:#202020;"></div>
<div style="position:absolute;left:33.0px;top:411.0px;width:1px;height:1px;background:#202020;"></div>
<svg style="position:absolute;left:447px;top:425px;" width="14" height="14" viewBox="0 0 14 14"><path d="M13 2L2 13M13 6L6 13M13 10L10 13" stroke="#808080" stroke-width="1.4"/><path d="M13 1L1 13M13 5L5 13M13 9L9 13" stroke="#fff" stroke-width="0.8"/></svg>
<div id="tx">
<span class="t" style="left:22.60px;top:4px;font-size:11.8px;line-height:14px;height:14px;color:#fff;font-weight:bold;transform:scaleX(0.8902);transform-origin:0 0;">PC</span>
<span class="t" style="left:43.20px;top:4px;font-size:11.8px;line-height:14px;height:14px;color:#fff;font-weight:bold;transform:scaleX(0.9298);transform-origin:0 0;">BASED</span>
<span class="t" style="left:88.00px;top:4px;font-size:11.8px;line-height:14px;height:14px;color:#fff;font-weight:bold;transform:scaleX(0.9698);transform-origin:0 0;">DIGITAL</span>
<span class="t" style="left:140.30px;top:4px;font-size:11.8px;line-height:14px;height:14px;color:#fff;font-weight:bold;transform:scaleX(0.9845);transform-origin:0 0;">STORAGE</span>
<span class="t" style="left:204.00px;top:4px;font-size:11.8px;line-height:14px;height:14px;color:#fff;font-weight:bold;transform:scaleX(0.9670);transform-origin:0 0;">OSCILLOSCOPE</span>
<span class="t" style="left:300.70px;top:4px;font-size:11.8px;line-height:14px;height:14px;color:#fff;font-weight:bold;transform:scaleX(1.0342);transform-origin:0 0;">2100</span>
<span class="t" style="left:488.60px;top:3px;font-size:12px;line-height:14px;height:14px;color:#d8d8d8;font-weight:bold;transform:scaleX(0.9180);transform-origin:0 0;">Control</span>
<span class="t" style="left:477.60px;top:39px;font-size:11.7px;line-height:13px;height:13px;color:#000;transform:scaleX(0.8805);transform-origin:0 0;">Horizontal</span>
<span class="t" style="left:566.10px;top:39px;font-size:11.7px;line-height:13px;height:13px;color:#000;transform:scaleX(0.8872);transform-origin:0 0;">TIME B</span>
<span class="t" style="left:566.10px;top:151px;font-size:11.7px;line-height:13px;height:13px;color:#000;transform:scaleX(0.9167);transform-origin:0 0;">TIME A</span>
<span class="t" style="left:477.10px;top:263px;font-size:11.7px;line-height:13px;height:13px;color:#000;transform:scaleX(0.9193);transform-origin:0 0;">Vertical</span>
<span class="t" style="left:474.60px;top:22px;font-size:11.7px;line-height:13px;height:13px;color:#868686;transform:scaleX(0.8042);transform-origin:0 0;">File</span>
<span class="t" style="left:502.10px;top:22px;font-size:11.7px;line-height:13px;height:13px;color:#868686;transform:scaleX(0.9129);transform-origin:0 0;">Help</span>
<span class="t" style="left:480.20px;top:75px;font-size:11.7px;line-height:13px;height:13px;color:#000;transform:scaleX(0.9071);transform-origin:0 0;">AUTO</span>
<span class="t" style="left:480.20px;top:115px;font-size:11.7px;line-height:13px;height:13px;color:#000;transform:scaleX(0.8462);transform-origin:0 0;">CH1</span>
<span class="t" style="left:480.20px;top:155px;font-size:11.7px;line-height:13px;height:13px;color:#000;transform:scaleX(0.8927);transform-origin:0 0;">Positive</span>
<span class="t" style="left:480.20px;top:194px;font-size:11.7px;line-height:13px;height:13px;color:#000;transform:scaleX(0.8528);transform-origin:0 0;">AC</span>
<span class="t" style="left:569.10px;top:59px;font-size:11.7px;line-height:13px;height:13px;color:#808080;transform:scaleX(0.8431);transform-origin:0 0;">0.2uS</span>
<span class="t" style="left:569.00px;top:171px;font-size:11.7px;line-height:13px;height:13px;color:#808080;transform:scaleX(0.8173);transform-origin:0 0;">5uS</span>
<span class="t" style="left:481.10px;top:347px;font-size:11.7px;line-height:13px;height:13px;color:#808080;transform:scaleX(0.8497);transform-origin:0 0;">10mV</span>
<span class="t" style="left:569.20px;top:347px;font-size:11.7px;line-height:13px;height:13px;color:#808080;transform:scaleX(0.8112);transform-origin:0 0;">5V</span>
<span class="t" style="left:492.60px;top:55px;font-size:11.7px;line-height:13px;height:13px;color:#000;transform:scaleX(0.8718);transform-origin:0 0;">MODE</span>
<span class="t" style="left:484.40px;top:95px;font-size:13px;line-height:15px;height:15px;color:#000;transform:scaleX(1.0146);transform-origin:0 0;">Source</span>
<span class="t" style="left:492.60px;top:135px;font-size:11.7px;line-height:13px;height:13px;color:#000;transform:scaleX(0.8896);transform-origin:0 0;">Slope</span>
<span class="t" style="left:492.70px;top:175px;font-size:11.7px;line-height:13px;height:13px;color:#000;transform:scaleX(0.8706);transform-origin:0 0;">Couple</span>
<span class="t" style="left:495.00px;top:216px;font-size:11.7px;line-height:13px;height:13px;color:#000;transform:scaleX(0.8861);transform-origin:0 0;">STOP</span>
<span class="t" style="left:481.30px;top:240px;font-size:11.7px;line-height:13px;height:13px;color:#000;transform:scaleX(0.9108);transform-origin:0 0;">AUTO SET</span>
<span class="t" style="left:495.00px;top:280px;font-size:11.7px;line-height:13px;height:13px;color:#000;transform:scaleX(0.8500);transform-origin:0 0;">CH.A</span>
<span class="t" style="left:550.20px;top:280px;font-size:11.7px;line-height:13px;height:13px;color:#000;transform:scaleX(0.8826);transform-origin:0 0;">ADD</span>
<span class="t" style="left:550.00px;top:296px;font-size:11.7px;line-height:13px;height:13px;color:#000;transform:scaleX(0.8797);transform-origin:0 0;">SUB</span>
<span class="t" style="left:549.90px;top:311px;font-size:11.7px;line-height:13px;height:13px;color:#000;transform:scaleX(0.8923);transform-origin:0 0;">X-Y</span>
<span class="t" style="left:598.80px;top:280px;font-size:11.7px;line-height:13px;height:13px;color:#000;transform:scaleX(0.8500);transform-origin:0 0;">CH.B</span>
<span class="t" style="left:510.80px;top:294px;font-size:11.7px;line-height:13px;height:13px;color:#000;transform:scaleX(0.8402);transform-origin:0 0;">DC</span>
<span class="t" style="left:510.80px;top:310px;font-size:11.7px;line-height:13px;height:13px;color:#000;transform:scaleX(0.8282);transform-origin:0 0;">AC</span>
<span class="t" style="left:510.80px;top:326px;font-size:11.7px;line-height:13px;height:13px;color:#000;transform:scaleX(0.8654);transform-origin:0 0;">GND</span>
<span class="t" style="left:598.80px;top:296px;font-size:11.7px;line-height:13px;height:13px;color:#000;transform:scaleX(0.8402);transform-origin:0 0;">DC</span>
<span class="t" style="left:598.80px;top:312px;font-size:11.7px;line-height:13px;height:13px;color:#000;transform:scaleX(0.8282);transform-origin:0 0;">AC</span>
<span class="t" style="left:598.80px;top:328px;font-size:11.7px;line-height:13px;height:13px;color:#000;transform:scaleX(0.8538);transform-origin:0 0;">GND</span>
<span class="t" style="left:166.80px;top:25px;font-size:10.2px;line-height:11px;height:11px;color:#000;transform:scaleX(0.8710);transform-origin:0 0;-webkit-text-stroke:0.15px #000;">F</span>
<span class="t" style="left:171.90px;top:30px;font-size:9.6px;line-height:11px;height:11px;color:#000;transform:scaleX(0.8814);transform-origin:0 0;-webkit-text-stroke:0.15px #000;">F</span>
<span class="t" style="left:176.30px;top:33px;font-size:9.4px;line-height:11px;height:11px;color:#000;transform:scaleX(1.0877);transform-origin:0 0;-webkit-text-stroke:0.15px #000;">T</span>
<span class="t" style="left:304.70px;top:26px;font-size:7.6px;line-height:8px;height:8px;color:#000;font-weight:bold;transform:scaleX(0.9011);transform-origin:0 0;font-family:'Liberation Mono',monospace;-webkit-text-stroke:0.25px #000;">FAIL</span>
<span class="t" style="left:305.30px;top:35px;font-size:7.6px;line-height:8px;height:8px;color:#000;font-weight:bold;transform:scaleX(0.8901);transform-origin:0 0;font-family:'Liberation Mono',monospace;-webkit-text-stroke:0.25px #000;">SAFE</span>
<span class="t" style="left:343.80px;top:30px;font-size:12px;line-height:14px;height:14px;color:#000;font-weight:bold;transform:scaleX(0.8276);transform-origin:0 0;-webkit-text-stroke:0.3px #000;">C</span>
<span class="t" style="left:365.00px;top:29px;font-size:13.6px;line-height:15px;height:15px;color:#000;font-weight:bold;transform:scaleX(1.0102);transform-origin:0 0;font-family:'Liberation Serif',serif;">A</span>
<span class="t" style="left:391.70px;top:28px;font-size:13px;line-height:15px;height:15px;color:#000;font-weight:bold;transform:scaleX(0.7926);transform-origin:0 0;-webkit-text-stroke:0.45px #000;">1:1</span>
<span class="t" style="left:412.90px;top:27px;font-size:13px;line-height:15px;height:15px;color:#000;font-weight:bold;transform:scaleX(0.6346);transform-origin:0 0;-webkit-text-stroke:0.45px #000;">10:1</span>
</div>
</div></body></html>
